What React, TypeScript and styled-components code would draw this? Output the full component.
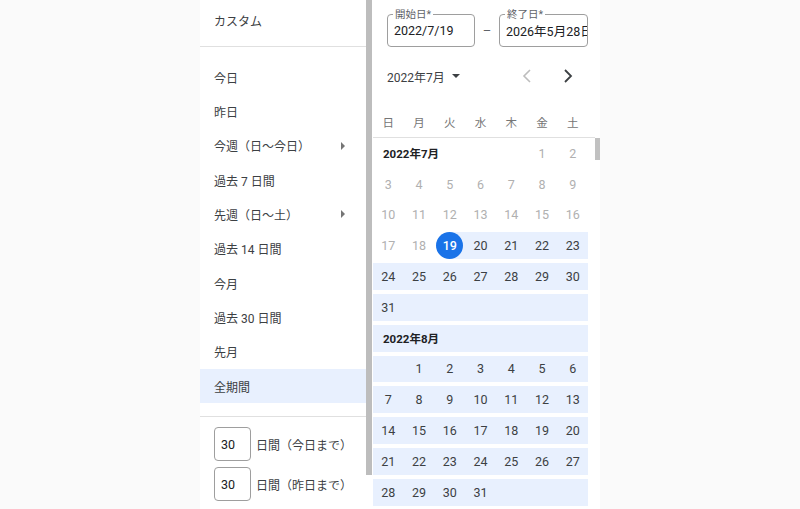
import { FC } from 'react';
import styled, { createGlobalStyle } from 'styled-components';

const GlobalStyle = createGlobalStyle`
    html, body {
        margin: 0;
        padding: 0;
        background: #fafafa;
    }
    body {
        font-family: Roboto, "Noto Sans CJK JP", "Noto Sans", sans-serif;
        color: #3c4043;
    }
    * {
        box-sizing: border-box;
    }
`;

const RANGE_BG = '#e8f0fe';

const Page = styled.div`
    width: 800px;
    height: 509px;
    display: flex;
    justify-content: center;
    background: #fafafa;
    overflow: hidden;
`;

const Picker = styled.div`
    width: 400px;
    height: 100%;
    display: flex;
    background: #fff;
`;

/* ---------- left presets ---------- */

const PresetColumn = styled.div`
    width: 166px;
    display: flex;
    flex-direction: column;
`;

const CustomItem = styled.div`
    height: 47px;
    padding: 0 14px 6px;
    display: flex;
    align-items: center;
    font-size: 12px;
    border-bottom: 1px solid #e0e0e0;
`;

const PresetList = styled.div`
    padding: 13px 0;
    border-bottom: 1px solid #e0e0e0;
`;

const PresetItem = styled.div<{ $active?: boolean }>`
    height: 34.33px;
    padding: 0 21px 0 14px;
    display: flex;
    align-items: center;
    justify-content: space-between;
    font-size: 12px;
    white-space: nowrap;
    background: ${p => (p.$active ? RANGE_BG : 'transparent')};
`;

const SubArrow = styled.span`
    width: 0;
    height: 0;
    border-top: 4px solid transparent;
    border-bottom: 4px solid transparent;
    border-left: 4px solid #757575;
`;

const DayCounts = styled.div`
    padding: 10px 0 0 14px;
    display: flex;
    flex-direction: column;
    gap: 6px;
`;

const DayCountRow = styled.div`
    display: flex;
    align-items: center;
    gap: 5px;
    font-size: 12px;
    white-space: nowrap;
`;

const CountBox = styled.div`
    width: 37px;
    height: 34px;
    border: 1px solid #9e9e9e;
    border-radius: 4px;
    padding-left: 6px;
    display: flex;
    align-items: center;
    font-size: 12.5px;
    color: #202124;
`;

const LeftScrollTrack = styled.div`
    width: 6px;
    height: 100%;
`;

const LeftScrollThumb = styled.div`
    height: 475px;
    background: #bdbdbd;
`;

/* ---------- right calendar ---------- */

const CalendarPanel = styled.div`
    width: 228px;
    display: flex;
    flex-direction: column;
`;

const FieldsRow = styled.div`
    display: flex;
    align-items: center;
    padding: 14px 0 0 15px;
`;

const DateField = styled.div<{ $width: number }>`
    position: relative;
    width: ${p => p.$width}px;
    height: 33px;
    border: 1px solid #9e9e9e;
    border-radius: 4px;
    padding: 0 0 0 6px;
    display: flex;
    align-items: center;
`;

const FieldValue = styled.div`
    overflow: hidden;
    white-space: nowrap;
    font-size: 12.5px;
    color: #202124;
`;

const FieldLabel = styled.span`
    position: absolute;
    top: -7px;
    left: 5px;
    padding: 0 2px;
    background: #fff;
    font-size: 10.5px;
    line-height: 13px;
    color: #5f6368;
`;

const Dash = styled.span`
    width: 24px;
    text-align: center;
    font-size: 13px;
    color: #5f6368;
`;

const MonthNav = styled.div`
    margin-top: 13px;
    height: 32px;
    padding: 0 25px 0 15px;
    display: flex;
    align-items: center;
    justify-content: space-between;
`;

const MonthButton = styled.div`
    display: flex;
    align-items: center;
    gap: 7px;
    font-size: 12px;
    color: #3c4043;
`;

const DropCaret = styled.span`
    width: 0;
    height: 0;
    border-left: 4px solid transparent;
    border-right: 4px solid transparent;
    border-top: 4px solid #3c4043;
`;

const NavArrows = styled.div`
    display: flex;
    align-items: center;
    gap: 27px;

    > svg {
        display: block;
    }
`;

const WeekdayBar = styled.div`
    margin: 15px 0 0 1px;
    width: 222px;
    height: 31px;
    border-bottom: 1px solid #e0e0e0;
`;

const WeekGrid = styled.div`
    display: grid;
    grid-template-columns: repeat(7, 30.72px);
    height: 100%;
`;

const Weekday = styled.div`
    display: flex;
    align-items: center;
    justify-content: center;
    font-size: 11.5px;
    color: #757575;
`;

const CalendarBody = styled.div`
    flex: 1;
    margin-left: 1px;
    display: flex;
    overflow: hidden;
`;

const Months = styled.div`
    width: 215px;
    display: flex;
    flex-direction: column;
`;

const WeekRow = styled.div`
    display: grid;
    grid-template-columns: repeat(7, 30.72px);
    height: 30.8px;
    padding: 2px 0;
    flex-shrink: 0;
`;

type Fill = 'none' | 'full' | 'right';

const fillBg = (fill: Fill) =>
    fill === 'full'
        ? RANGE_BG
        : fill === 'right'
        ? `linear-gradient(to right, transparent 50%, ${RANGE_BG} 50%)`
        : 'transparent';

const DayCell = styled.div<{ $fill: Fill; $muted?: boolean }>`
    display: flex;
    align-items: center;
    justify-content: center;
    font-size: 12.5px;
    color: ${p => (p.$muted ? '#b0b0b0' : '#3c4043')};
    background: ${p => fillBg(p.$fill)};
`;

const SelectedDay = styled.span`
    width: 27px;
    height: 27px;
    border-radius: 50%;
    background: #1a73e8;
    color: #fff;
    font-weight: 500;
    display: flex;
    align-items: center;
    justify-content: center;
`;

const MonthLabel = styled.div<{ $span: number; $fill: Fill }>`
    grid-column: 1 / span ${p => p.$span};
    display: flex;
    align-items: center;
    padding-left: 10px;
    font-size: 11.5px;
    font-weight: 700;
    color: #202124;
    background: ${p => fillBg(p.$fill)};
`;

const BodyScrollTrack = styled.div`
    width: 5px;
    margin-left: auto;
`;

const BodyScrollThumb = styled.div`
    height: 22px;
    background: #c1c1c1;
`;

/* ---------- data ---------- */

const presets = [
    { label: '今日' },
    { label: '昨日' },
    { label: '今週（日〜今日）', sub: true },
    { label: '過去 7 日間' },
    { label: '先週（日〜土）', sub: true },
    { label: '過去 14 日間' },
    { label: '今月' },
    { label: '過去 30 日間' },
    { label: '先月' },
    { label: '全期間', active: true },
];

const weekdays = ['日', '月', '火', '水', '木', '金', '土'];

type MonthData = { year: number; month: number; firstDow: number; days: number };

const months: MonthData[] = [
    { year: 2022, month: 7, firstDow: 5, days: 31 },
    { year: 2022, month: 8, firstDow: 1, days: 31 },
];

const rangeStart = { month: 7, day: 19 };

const buildWeeks = (firstDow: number, days: number) => {
    const cells: (number | null)[] = Array(firstDow).fill(null);
    for (let d = 1; d <= days; d++) cells.push(d);
    while (cells.length % 7) cells.push(null);
    const weeks: (number | null)[][] = [];
    for (let i = 0; i < cells.length; i += 7) weeks.push(cells.slice(i, i + 7));
    return weeks;
};

const isInRange = (month: number, day: number | null, leading: boolean) => {
    if (month > rangeStart.month) return true;
    if (day === null) return !leading;
    return day >= rangeStart.day;
};

const ChevronLeft: FC<{ color: string }> = ({ color }) => (
    <svg width="14" height="16" viewBox="0 0 14 16">
        <polyline points="10,2 4,8 10,14" fill="none" stroke={color} strokeWidth="1.6" />
    </svg>
);

const ChevronRight: FC<{ color: string }> = ({ color }) => (
    <svg width="14" height="16" viewBox="0 0 14 16">
        <polyline points="4,2 10,8 4,14" fill="none" stroke={color} strokeWidth="1.8" />
    </svg>
);

const MonthBlock: FC<{ data: MonthData }> = ({ data }) => {
    const weeks = buildWeeks(data.firstDow, data.days);
    const inlineLabel = data.firstDow >= 4;
    const labelText = `${data.year}年${data.month}月`;
    const labelFill: Fill = data.month > rangeStart.month ? 'full' : 'none';

    return (
        <>
            {!inlineLabel && (
                <WeekRow>
                    <MonthLabel $span={7} $fill={labelFill}>
                        {labelText}
                    </MonthLabel>
                </WeekRow>
            )}
            {weeks.map((week, wi) => (
                <WeekRow key={wi}>
                    {wi === 0 && inlineLabel && (
                        <MonthLabel $span={data.firstDow} $fill="none">
                            {labelText}
                        </MonthLabel>
                    )}
                    {week.map((day, di) => {
                        if (wi === 0 && inlineLabel && di < data.firstDow) return null;
                        const leading = wi === 0 && day === null;
                        const inRange = isInRange(data.month, day, leading);
                        const isStart = data.month === rangeStart.month && day === rangeStart.day;
                        const fill: Fill = isStart ? 'right' : inRange ? 'full' : 'none';
                        return (
                            <DayCell key={di} $fill={fill} $muted={!inRange}>
                                {isStart ? <SelectedDay>{day}</SelectedDay> : day}
                            </DayCell>
                        );
                    })}
                </WeekRow>
            ))}
        </>
    );
};

export default function App() {
    return (
        <>
            <GlobalStyle />
            <Page>
                <Picker>
                    <PresetColumn>
                        <CustomItem>カスタム</CustomItem>
                        <PresetList>
                            {presets.map(p => (
                                <PresetItem key={p.label} $active={p.active}>
                                    <span>{p.label}</span>
                                    {p.sub && <SubArrow />}
                                </PresetItem>
                            ))}
                        </PresetList>
                        <DayCounts>
                            <DayCountRow>
                                <CountBox>30</CountBox>
                                <span>日間（今日まで）</span>
                            </DayCountRow>
                            <DayCountRow>
                                <CountBox>30</CountBox>
                                <span>日間（昨日まで）</span>
                            </DayCountRow>
                        </DayCounts>
                    </PresetColumn>
                    <LeftScrollTrack>
                        <LeftScrollThumb />
                    </LeftScrollTrack>

                    <CalendarPanel>
                        <FieldsRow>
                            <DateField $width={88}>
                                <FieldLabel>開始日*</FieldLabel>
                                <FieldValue>2022/7/19</FieldValue>
                            </DateField>
                            <Dash>–</Dash>
                            <DateField $width={89}>
                                <FieldLabel>終了日*</FieldLabel>
                                <FieldValue>2026年5月28日</FieldValue>
                            </DateField>
                        </FieldsRow>

                        <MonthNav>
                            <MonthButton>
                                <span>2022年7月</span>
                                <DropCaret />
                            </MonthButton>
                            <NavArrows>
                                <ChevronLeft color="#bdbdbd" />
                                <ChevronRight color="#3c4043" />
                            </NavArrows>
                        </MonthNav>

                        <WeekdayBar>
                            <WeekGrid>
                                {weekdays.map(w => (
                                    <Weekday key={w}>{w}</Weekday>
                                ))}
                            </WeekGrid>
                        </WeekdayBar>

                        <CalendarBody>
                            <Months>
                                {months.map(m => (
                                    <MonthBlock key={m.month} data={m} />
                                ))}
                            </Months>
                            <BodyScrollTrack>
                                <BodyScrollThumb />
                            </BodyScrollTrack>
                        </CalendarBody>
                    </CalendarPanel>
                </Picker>
            </Page>
        </>
    );
}
